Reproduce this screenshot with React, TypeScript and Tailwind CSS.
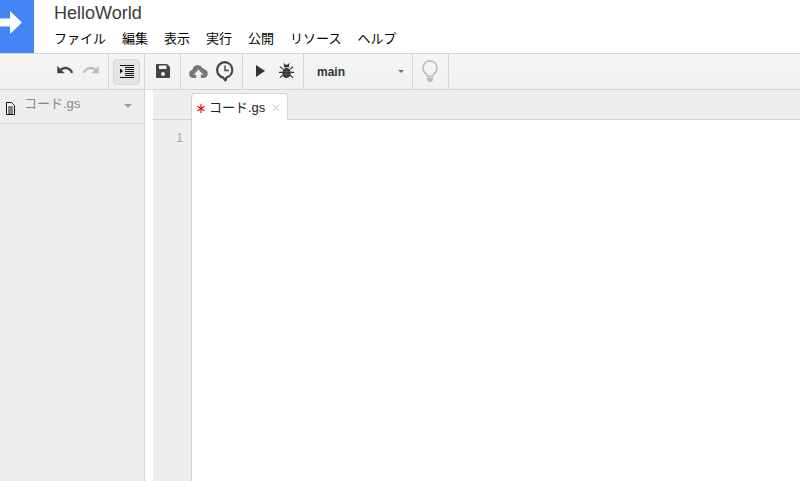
const font = { fontFamily: '"Liberation Sans", "Noto Sans CJK JP", sans-serif' };

function Arrow() {
  return (
    <svg width="22" height="23" viewBox="0 0 22 23" className="block">
      <path d="M0 7.500h10V0l12 11.500L10 23v-7.500H0z" fill="#fff" />
    </svg>
  );
}

function Mat({ d, fill = "#444", size = 18, flip = false }: { d: string; fill?: string; size?: number; flip?: boolean }) {
  return (
    <svg width={size} height={size} viewBox="0 0 24 24" className={flip ? "-scale-x-100" : ""}>
      <path d={d} fill={fill} stroke={fill} strokeWidth="0.600" />
    </svg>
  );
}

const undo = "M12.500 8c-2.650 0-5.050.99-6.900 2.600L2 7v9h9l-3.620-3.620c1.390-1.160 3.160-1.880 5.120-1.880 3.540 0 6.550 2.310 7.600 5.500l2.370-.78C21.080 11.030 17.150 8 12.500 8z";

function IndentIcon() {
  return (
    <svg width="14" height="13" viewBox="0 0 14 13">
      <path d="M0 0h14v1H0zM5 2h9v1H5zM5 4h9v1H5zM5 6h9v1H5zM5 8h9v1H5zM5 10h9v1H5zM0 12h14v1H0zM0 3.500l3 2.500-3 2.500z" fill="#111" />
    </svg>
  );
}

function Save() {
  return (
    <svg width="14" height="14" viewBox="0 0 14 14">
      <path fillRule="evenodd" d="M1 0h10l3 3v10a1 1 0 0 1-1 1H1a1 1 0 0 1-1-1V1a1 1 0 0 1 1-1zM3 1.500V5h7.500V1.500zM7 8a2 2 0 1 0 0 4 2 2 0 0 0 0-4z" fill="#444" />
    </svg>
  );
}

function Cloud() {
  return (
    <svg width="19" height="14" viewBox="0 0 20 15">
      <path fillRule="evenodd" d="M4.500 15A4.500 4.500 0 0 1 3.600 6.100 5.500 5.500 0 0 1 13.900 4.100 3.800 3.800 0 0 1 16 5.500a4.800 4.800 0 0 1-.5 9.500h-3v-3.500H15L10 6l-5 5.500h2.500V15z" fill="#777" />
    </svg>
  );
}

function Clock() {
  return (
    <svg width="18" height="21" viewBox="0 0 18 21">
      <path d="M9 1.200a7.800 7.800 0 0 0-1.800 15.400L9.500 19.500l1-3A7.800 7.800 0 0 0 9 1.200z" fill="#f5f5f5" stroke="#444" strokeWidth="2.200" strokeLinejoin="round" />
      <path d="M9 4.500V9.500h4" fill="none" stroke="#444" strokeWidth="1.400" />
    </svg>
  );
}

function Bug() {
  return (
    <svg width="15" height="16" viewBox="0 0 16 17">
      <ellipse cx="8" cy="10.500" rx="4.500" ry="5.500" fill="#333" />
      <path d="M5 4.500a3 3 0 0 1 6 0z" fill="#333" />
      <path d="M5 .500 6.500 2.500M11 .500 9.500 2.500M1 4l3 2.500M15 4l-3 2.500M0 10h4M16 10h-4M1 15.500l3-2.500M15 15.500l-3-2.500" stroke="#333" strokeWidth="1.200" fill="none" />
      <path d="M8 5.500v10M4 9h8M4 12h8" stroke="#777" strokeWidth="0.500" />
    </svg>
  );
}

function Bulb() {
  return (
    <svg width="16" height="23" viewBox="0 0 16 23">
      <path d="M8 1a7 7 0 0 0-4 12.700c.8.800 1.200 1.500 1.200 2.300h5.600c0-.8.400-1.500 1.200-2.300A7 7 0 0 0 8 1z" fill="none" stroke="#bbb" strokeWidth="1.500" />
      <path d="M5 17.500h6V20l-1.500 2h-3L5 20z" fill="#bbb" />
    </svg>
  );
}

function FileIcon() {
  return (
    <svg width="10" height="13" viewBox="0 0 10 13">
      <path d="M.5.500h5l3 3v9H.5z" fill="#f5f5f5" stroke="#111" />
      <path d="M2 5h5M2 7h5M2 9h5M2 11h5" stroke="#111" />
    </svg>
  );
}

function Star() {
  return (
    <svg width="8" height="9" viewBox="0 0 8 9">
      <path d="M4 0v9M.5 2.200l7 4.600M7.500 2.200l-7 4.600" stroke="#e00" strokeWidth="1.100" fill="none" />
    </svg>
  );
}

export default function App() {
  return (
    <div className="flex h-screen w-full flex-col overflow-hidden bg-white text-black" style={font}>
      <header className="flex h-[54px] shrink-0 border-b border-gray-300">
        <div className="w-[34px] bg-[#4285f4] pt-[11px]">
          <Arrow />
        </div>
        <div className="ml-5 flex flex-col">
          <div className="mt-px text-lg leading-6 text-[#3b3b3b]">HelloWorld</div>
          <nav className="mt-1 flex gap-4 text-[13px] leading-5">
            <span>ファイル</span>
            <span>編集</span>
            <span>表示</span>
            <span>実行</span>
            <span>公開</span>
            <span>リソース</span>
            <span>ヘルプ</span>
          </nav>
        </div>
      </header>

      <div className="flex h-9 shrink-0 border-b border-gray-300 bg-gradient-to-b from-[#f5f5f5] to-[#f1f1f1]">
        <div className="flex w-[109px] items-center justify-end gap-2 border-r border-gray-300 pb-1 pr-2">
          <Mat d={undo} />
          <Mat d={undo} fill="#bbb" flip />
        </div>
        <div className="flex w-9 items-center justify-center border-r border-gray-300">
          <div className="flex h-[26px] w-[27px] items-center justify-center rounded-sm border border-gray-300 bg-[#e5e5e5]">
            <IndentIcon />
          </div>
        </div>
        <div className="flex w-9 items-center justify-center border-r border-gray-300 pb-0.5">
          <Save />
        </div>
        <div className="flex w-[62px] items-center justify-center gap-2 border-r border-gray-300 pb-px">
          <Cloud />
          <Clock />
        </div>
        <div className="flex w-[61px] items-center justify-center gap-3.5 border-r border-gray-300 pb-0.5 pl-1">
          <svg width="9" height="12" viewBox="0 0 9 12">
            <path d="M0 0l9 6-9 6z" fill="#333" />
          </svg>
          <Bug />
        </div>
        <div className="flex w-[109px] items-center justify-between border-r border-gray-300 pl-3 pr-2">
          <span className="ml-px text-xs font-bold text-[#333]">main</span>
          <span className="h-0 w-0 border-x-[3px] border-t-[3px] border-x-transparent border-t-gray-500" />
        </div>
        <div className="flex w-9 items-center justify-center border-r border-gray-300 pr-0.5">
          <Bulb />
        </div>
      </div>

      <div className="flex min-h-0 flex-1">
        <aside className="flex w-[145px] shrink-0 flex-col border-r border-gray-300 bg-[#eeeeee]">
          <div className="flex h-[34px] shrink-0 items-start border-b border-gray-300 pl-1.5 pr-3">
            <span className="mt-3"><FileIcon /></span>
            <span className="ml-2 mt-0.5 text-[13px] leading-6 text-[#888888]">コード.gs</span>
            <span className="ml-auto mt-3.5 h-0 w-0 border-x-4 border-t-4 border-x-transparent border-t-gray-400" />
          </div>
        </aside>
        <div className="w-2 shrink-0 bg-white" />
        <div className="flex min-w-0 flex-1 flex-col">
          <div className="flex h-[30px] shrink-0 border-b border-gray-300 bg-[#eeeeee] pl-[38px]">
            <div className="z-10 mt-[3px] flex h-[27px] w-[97px] items-center rounded-t-sm border-x border-t border-gray-300 bg-white pl-[5px] pt-0.5 text-[13px] text-[#222]">
              <Star />
              <span className="ml-1">コード.gs</span>
              <span className="ml-1.5 text-xs leading-none text-gray-300">✕</span>
            </div>
          </div>
          <div className="flex min-h-0 flex-1">
            <div className="w-[39px] shrink-0 border-r border-gray-300 bg-[#eeeeee] pr-2 pt-2.5 text-right text-xs text-gray-400">1</div>
            <div className="flex-1 bg-white" />
          </div>
        </div>
      </div>
    </div>
  );
}
